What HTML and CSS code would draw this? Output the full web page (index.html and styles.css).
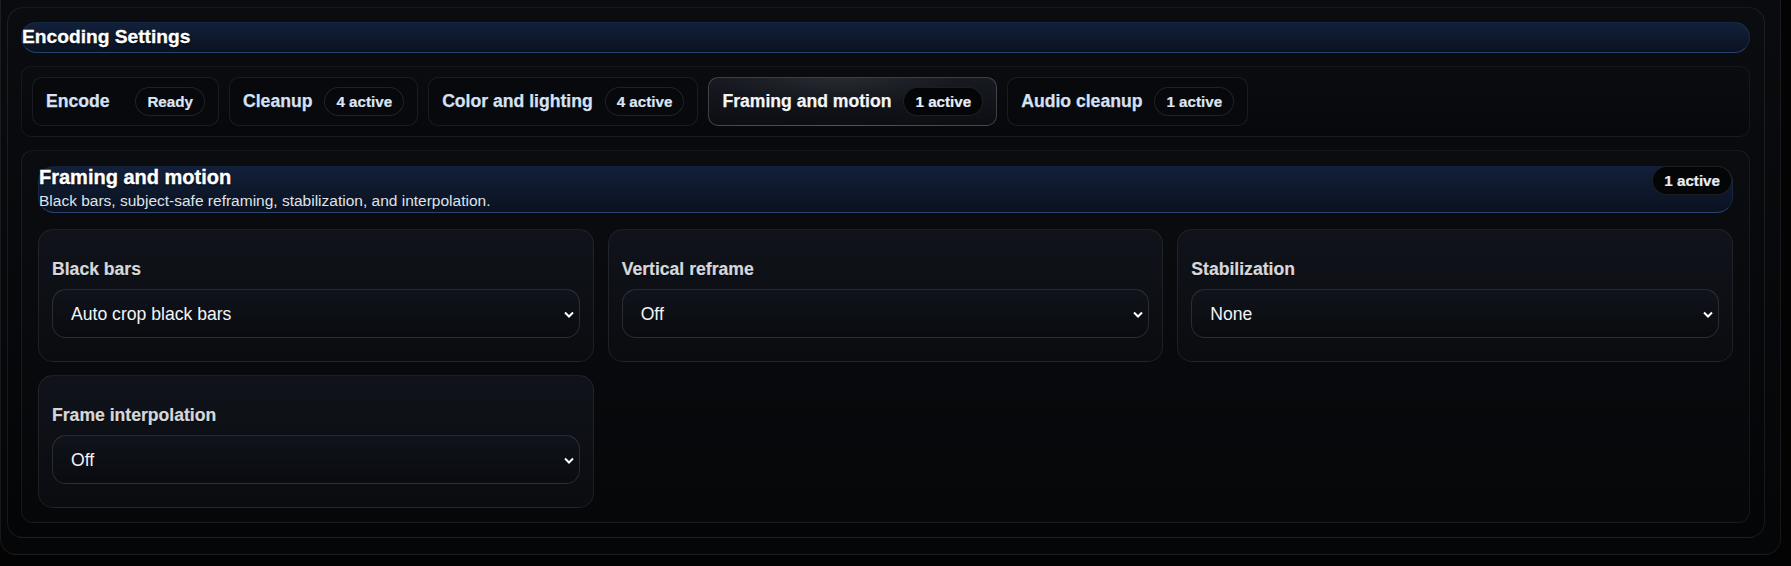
FILE: index.html
```html
<!DOCTYPE html>
<html lang="en">

<head>
    <meta charset="UTF-8">
    <title>Encoding Settings</title>
    <link rel="stylesheet" href="styles.css">
</head>

<body>
    <div class="shell">
        <div class="panel">
            <h2 class="panel-title">Encoding Settings</h2>

            <nav class="tabs">
                <button class="tab"><span class="tab-name">Encode</span><span class="badge">Ready</span></button>
                <button class="tab"><span class="tab-name">Cleanup</span><span class="badge">4 active</span></button>
                <button class="tab"><span class="tab-name">Color and lighting</span><span class="badge">4 active</span></button>
                <button class="tab tab-active"><span class="tab-name">Framing and motion</span><span class="badge">1 active</span></button>
                <button class="tab"><span class="tab-name">Audio cleanup</span><span class="badge">1 active</span></button>
            </nav>

            <section class="group">
                <header class="group-head">
                    <div>
                        <h3 class="group-title">Framing and motion</h3>
                        <p class="group-desc">Black bars, subject-safe reframing, stabilization, and interpolation.</p>
                    </div>
                    <span class="badge badge-dark">1 active</span>
                </header>

                <div class="fields">
                    <label class="field">
                        <span class="field-label">Black bars</span>
                        <span class="select-wrap">
                            <select class="select">
                                <option>Auto crop black bars</option>
                                <option>Keep black bars</option>
                            </select>
                            <svg class="chevron" width="10" height="7" viewBox="0 0 10 7"><path d="M1 1.5l4 4 4-4" fill="none" stroke="#fff" stroke-width="2"/></svg>
                        </span>
                    </label>
                    <label class="field">
                        <span class="field-label">Vertical reframe</span>
                        <span class="select-wrap">
                            <select class="select">
                                <option>Off</option>
                                <option>9:16 subject-safe</option>
                            </select>
                            <svg class="chevron" width="10" height="7" viewBox="0 0 10 7"><path d="M1 1.5l4 4 4-4" fill="none" stroke="#fff" stroke-width="2"/></svg>
                        </span>
                    </label>
                    <label class="field">
                        <span class="field-label">Stabilization</span>
                        <span class="select-wrap">
                            <select class="select">
                                <option>None</option>
                                <option>Light</option>
                                <option>Strong</option>
                            </select>
                            <svg class="chevron" width="10" height="7" viewBox="0 0 10 7"><path d="M1 1.5l4 4 4-4" fill="none" stroke="#fff" stroke-width="2"/></svg>
                        </span>
                    </label>
                    <label class="field">
                        <span class="field-label">Frame interpolation</span>
                        <span class="select-wrap">
                            <select class="select">
                                <option>Off</option>
                                <option>60 fps</option>
                            </select>
                            <svg class="chevron" width="10" height="7" viewBox="0 0 10 7"><path d="M1 1.5l4 4 4-4" fill="none" stroke="#fff" stroke-width="2"/></svg>
                        </span>
                    </label>
                </div>
            </section>
        </div>
    </div>
</body>
</html>
```

FILE: styles.css
```css
body {
    margin: 0;
    background-color: #030304;
    font-family: "Liberation Sans", Arial, sans-serif;
    color: #e6e9ef;
}

.shell {
    margin-right: 10px;
    padding: 7px 15px 16px 6px;
    background: linear-gradient(180deg, #0a0b0e, #050608);
    border: 1px solid rgba(255, 255, 255, 0.07);
    border-top: 0;
    border-radius: 0 0 16px 16px;
}

.panel {
    display: flex;
    flex-direction: column;
    gap: 13px;
    padding: 14px 14px 14px 13px;
    background: linear-gradient(180deg, #0b0c10, #040507);
    border: 1px solid rgba(255, 255, 255, 0.08);
    border-radius: 16px;
}

.panel-title {
    margin: 0;
    padding: 3px 0 4px;
    font-size: 19.2px;
    font-weight: bold;
    color: #ffffff;
    -webkit-text-stroke: 0.3px #ffffff;
    text-shadow: 0 1px 2px rgba(0, 0, 0, 0.9);
    background: linear-gradient(180deg, #12203a, #0a1221);
    border: 1px solid rgba(60, 95, 160, 0.25);
    border-bottom-color: rgba(70, 110, 180, 0.45);
    border-radius: 16px;
}

.tabs {
    display: flex;
    gap: 10px;
    padding: 10px 10px 10px;
    background: linear-gradient(180deg, #0b0c10, #07080b);
    border: 1px solid rgba(255, 255, 255, 0.06);
    border-radius: 10px;
}

.tab {
    display: flex;
    align-items: center;
    justify-content: space-between;
    gap: 12px;
    min-width: 187px;
    padding: 9px 13px;
    font-family: inherit;
    font-size: 17.6px;
    font-weight: bold;
    color: #d5e1f6;
    -webkit-text-stroke: 0.25px currentColor;
    text-shadow: 0 1px 1px rgba(0, 0, 0, 0.7);
    background: #08090d;
    border: 1px solid rgba(255, 255, 255, 0.08);
    border-radius: 10px;
    cursor: pointer;
}

.tab-active {
    color: #f4f5f7;
    background:
        radial-gradient(ellipse 60% 90% at 45% 0%, rgba(255, 255, 255, 0.07), transparent 70%),
        linear-gradient(180deg, #171a21, #0c0e13);
    border-color: rgba(255, 255, 255, 0.2);
}

.badge {
    padding: 5px 11px;
    font-size: 15.2px;
    font-weight: bold;
    color: #dce6f6;
    -webkit-text-stroke: 0.2px currentColor;
    background: #07080b;
    border: 1px solid rgba(255, 255, 255, 0.1);
    border-radius: 999px;
}

.tab-active .badge,
.badge-dark {
    color: #e9eef7;
    background: #040506;
}

.group {
    display: flex;
    flex-direction: column;
    gap: 16px;
    padding: 15px 16px 14px;
    background: linear-gradient(180deg, #0b0c10, #060709);
    border: 1px solid rgba(255, 255, 255, 0.07);
    border-radius: 12px;
}

.group-head {
    display: flex;
    justify-content: space-between;
    align-items: flex-start;
    padding-bottom: 2px;
    background: linear-gradient(180deg, #13203a, #0a1220);
    border: 1px solid rgba(60, 95, 160, 0.2);
    border-top: 0;
    border-bottom-color: rgba(70, 110, 180, 0.45);
    border-radius: 16px;
}

.group-title {
    margin: 0;
    font-size: 20px;
    font-weight: bold;
    color: #ffffff;
    -webkit-text-stroke: 0.35px #ffffff;
    text-shadow: 0 1px 2px rgba(0, 0, 0, 0.9);
}

.group-desc {
    margin: 3px 0 0;
    font-size: 15.5px;
    color: #dfe3ea;
}

.fields {
    display: grid;
    grid-template-columns: repeat(3, 1fr);
    gap: 13px 14px;
}

.field {
    display: flex;
    flex-direction: column;
    padding: 29px 13px 23px;
    background: linear-gradient(180deg, #10131a, #0a0c10);
    border: 1px solid rgba(255, 255, 255, 0.08);
    border-radius: 15px;
}

.field-label {
    margin-bottom: 9px;
    font-size: 17.6px;
    font-weight: bold;
    color: #d6d7db;
    -webkit-text-stroke: 0.2px currentColor;
    text-shadow: 0 1px 1px rgba(0, 0, 0, 0.6);
}

.select-wrap {
    position: relative;
    display: block;
}

.select {
    appearance: none;
    width: 100%;
    height: 49px;
    padding: 0 36px 0 18px;
    font-family: inherit;
    font-size: 17.6px;
    color: #f3f4f6;
    background: linear-gradient(180deg, #10131b, #090b0f);
    border: 1px solid rgba(255, 255, 255, 0.12);
    border-radius: 14px;
    outline: none;
}

.chevron {
    position: absolute;
    right: 6px;
    top: 50%;
    margin-top: -3px;
    pointer-events: none;
}
```
